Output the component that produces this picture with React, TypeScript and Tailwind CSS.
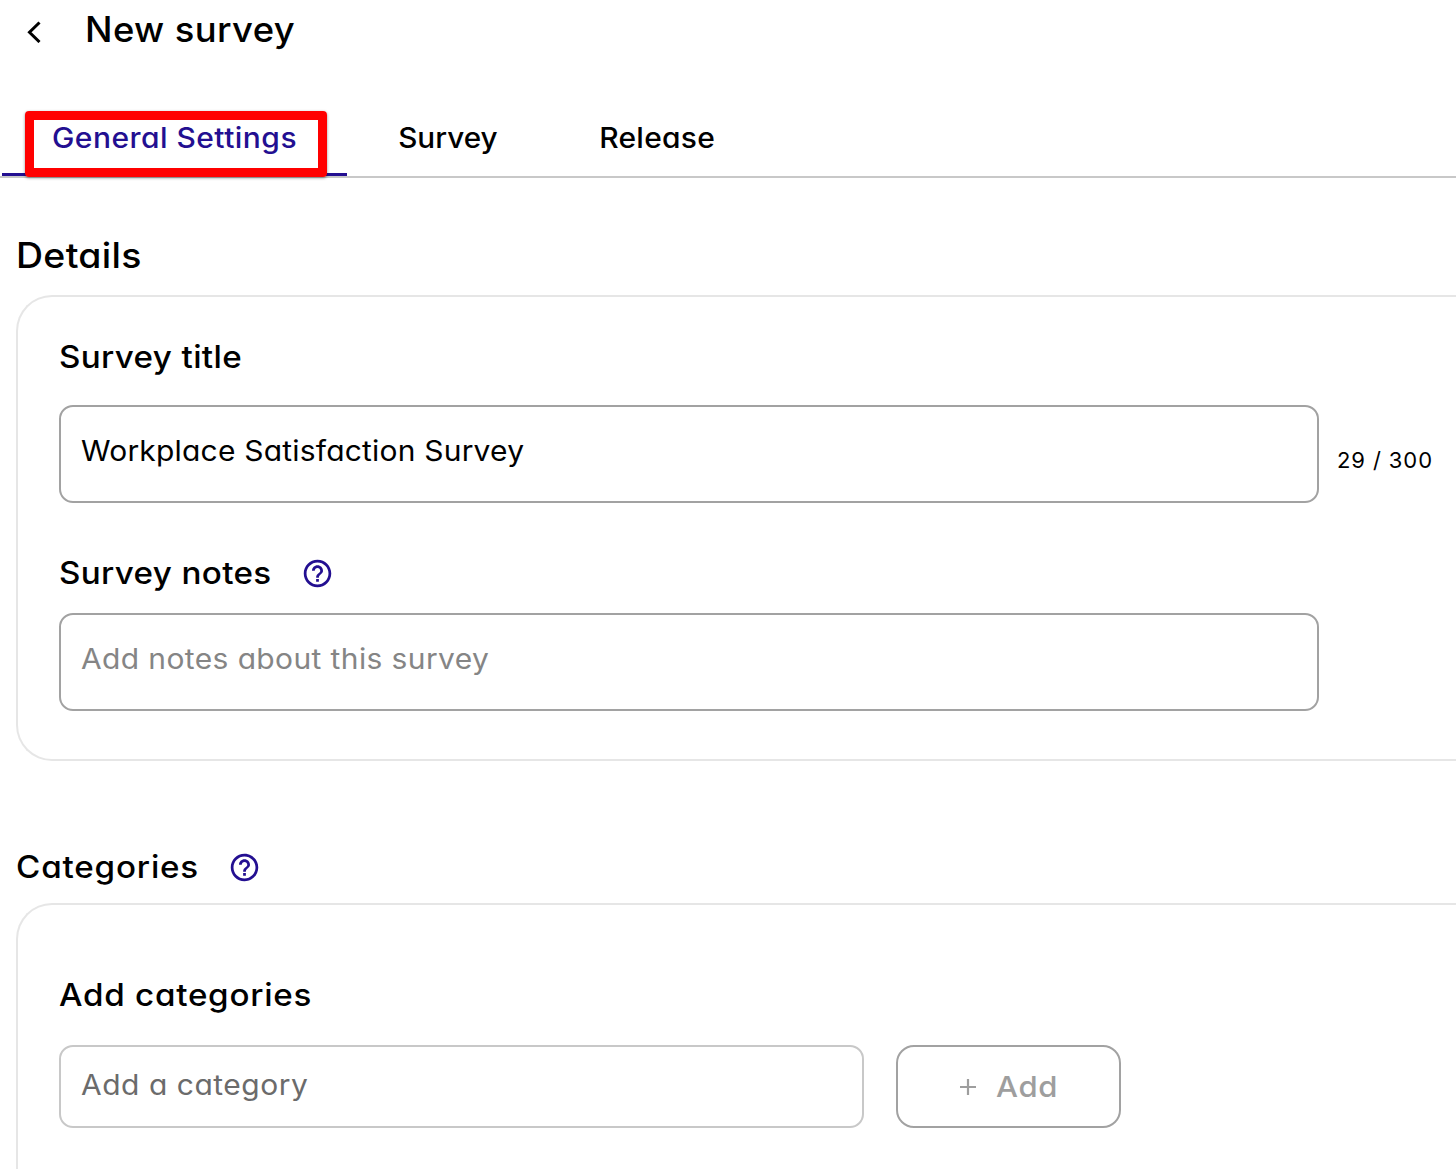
function HelpIcon() {
  return (
    <svg viewBox="0 0 24 24" className="mt-px h-[33px] w-[33px] shrink-0 fill-[#230f91]" aria-hidden="true">
      <path d="M11 18h2v-2h-2v2zm1-16C6.48 2 2 6.48 2 12s4.48 10 10 10 10-4.48 10-10S17.52 2 12 2zm0 18c-4.41 0-8-3.59-8-8s3.59-8 8-8 8 3.59 8 8-3.59 8-8 8zm0-14c-2.21 0-4 1.79-4 4h2c0-1.1.9-2 2-2s2 .9 2 2c0 2-3 1.75-3 5h2c0-2.25 3-2.5 3-5 0-2.21-1.79-4-4-4z" />
    </svg>
  );
}

export default function App() {
  return (
    <div className="h-[1169px] w-full overflow-hidden whitespace-nowrap bg-white font-['Inter',sans-serif] text-black [font-feature-settings:'cv11']">
      <header className="flex h-[60px] items-center pl-[27px]">
        <svg viewBox="0 0 14 22" className="mt-1 h-[22px] w-[14px]" fill="none" stroke="black" strokeWidth="3">
          <path d="M12.5 1.5 2.5 11.3 12.5 21" />
        </svg>
        <h1 className="-mt-0.5 ml-[44px] origin-left scale-x-[1.04] text-[35px] font-medium tracking-[0.37px]">New survey</h1>
      </header>

      <nav className="relative mt-10 flex h-[78px] border-b-2 border-[#c8c8c8] pl-[2px] text-[28px] font-medium">
        <button className="h-[76px] w-[345px] border-b-3 border-[#230f91] pt-[3px] text-[#230f91]">
          <span className="inline-block scale-x-[1.07] tracking-[0.44px]">General Settings</span>
        </button>
        <button className="h-[76px] w-[201px]">
          <span className="inline-block scale-x-[1.06]">Survey</span>
        </button>
        <button className="h-[76px] w-[219px]">
          <span className="inline-block scale-x-[1.07] tracking-[0.25px]">Release</span>
        </button>
        <span className="absolute left-[25px] top-[11px] h-[66px] w-[302px] rounded-[4px] border-9 border-[#ff0000] shadow-[0_1px_3px_rgba(0,0,0,0.45)]" />
      </nav>

      <main className="pl-4">
        <h2 className="mt-[57px] flex h-[40px] origin-left items-center text-[35px] font-medium tracking-[0.3px]">
          <span className="origin-left scale-x-[1.07]">Details</span>
        </h2>
        <section className="mt-[20px] h-[466px] rounded-l-[36px] border-2 border-r-0 border-[#e6e6e6] pl-[41px]">
          <label className="mt-[40px] flex h-[40px] items-center text-[31px] font-medium tracking-[0.34px]">
            <span className="origin-left scale-x-[1.07]">Survey title</span>
          </label>
          <div className="mt-[28px] flex">
            <div className="flex h-[98px] w-[1260px] rounded-[14px] border-2 border-[#a2a2a2] pl-5 pt-6">
              <span className="h-10 origin-left scale-x-[1.07] text-[28px] leading-10 tracking-[0.2px]">Workplace Satisfaction Survey</span>
            </div>
            <span className="ml-[18px] mt-[35px] h-10 text-[22px] leading-10 tracking-[0.9px]">29 / 300</span>
          </div>
          <div className="mt-[50px] flex h-[40px] items-center">
            <label className="w-[242px] text-[31px] font-medium tracking-[0.34px]">
              <span className="inline-block origin-left scale-x-[1.07]">Survey notes</span>
            </label>
            <HelpIcon />
          </div>
          <div className="mt-[20px] flex h-[98px] w-[1260px] rounded-[14px] border-2 border-[#a2a2a2] pl-5 pt-6">
            <span className="h-10 origin-left scale-x-[1.07] text-[28px] leading-10 tracking-[0.37px] text-[#858585]">Add notes about this survey</span>
          </div>
        </section>

        <div className="mt-[86px] flex h-[40px] items-center">
          <h2 className="w-[212px] text-[31px] font-medium tracking-[0.77px]">
            <span className="inline-block origin-left scale-x-[1.07]">Categories</span>
          </h2>
          <HelpIcon />
        </div>
        <section className="mt-[16px] h-[300px] rounded-l-[36px] border-2 border-r-0 border-[#e6e6e6] pl-[41px]">
          <label className="mt-[70px] flex h-[40px] items-center text-[31px] font-medium tracking-[0.69px]">
            <span className="origin-left scale-x-[1.07]">Add categories</span>
          </label>
          <div className="mt-[30px] flex gap-8">
            <div className="flex h-[83px] w-[805px] items-center rounded-[14px] border-2 border-[#c8c8c8] pb-[3px] pl-5">
              <span className="origin-left scale-x-[1.07] text-[28px] tracking-[0.5px] text-[#6b6b6b]">Add a category</span>
            </div>
            <button className="flex h-[83px] w-[225px] items-center rounded-[18px] border-2 border-[#a2a2a2] pl-[62px] font-medium text-[#9e9e9e]">
              <svg viewBox="0 0 16 16" className="h-4 w-4" stroke="currentColor" strokeWidth="2.2">
                <path d="M8 0v16M0 8h16" />
              </svg>
              <span className="ml-5 origin-left scale-x-[1.07] text-[29px] tracking-[0.6px]">Add</span>
            </button>
          </div>
        </section>
      </main>
    </div>
  );
}
